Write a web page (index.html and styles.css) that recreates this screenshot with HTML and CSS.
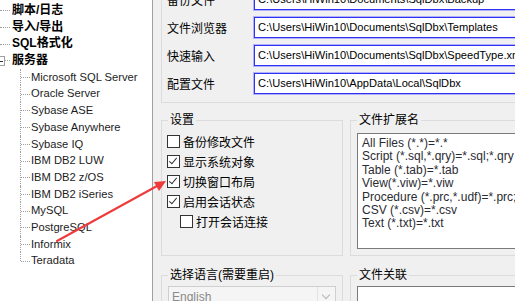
FILE: index.html
```html
<!DOCTYPE html>
<html lang="zh-CN">
<head>
  <meta charset="UTF-8">
  <title>SqlDbx 选项</title>
  <link rel="stylesheet" href="styles.css">
</head>
<body>
  <div class="tree">
    <ul class="roots">
      <li class="root">脚本/日志</li>
      <li class="root">导入/导出</li>
      <li class="root">SQL格式化</li>
      <li class="root open"><span class="toggle"></span>服务器</li>
    </ul>
    <ul class="children">
      <li>Microsoft SQL Server</li>
      <li>Oracle Server</li>
      <li>Sybase ASE</li>
      <li>Sybase Anywhere</li>
      <li>Sybase IQ</li>
      <li>IBM DB2 LUW</li>
      <li>IBM DB2 z/OS</li>
      <li>IBM DB2 iSeries</li>
      <li>MySQL</li>
      <li>PostgreSQL</li>
      <li>Informix</li>
      <li>Teradata</li>
    </ul>
  </div>

  <div class="main">
    <div class="paths">
      <label>备份文件</label>
      <div class="path-input">C:\Users\HiWin10\Documents\SqlDbx\Backup</div>
      <label>文件浏览器</label>
      <div class="path-input">C:\Users\HiWin10\Documents\SqlDbx\Templates</div>
      <label>快速输入</label>
      <div class="path-input">C:\Users\HiWin10\Documents\SqlDbx\SpeedType.xml</div>
      <label>配置文件</label>
      <div class="path-input">C:\Users\HiWin10\AppData\Local\SqlDbx</div>
    </div>

    <div class="groups">
      <fieldset class="group settings">
        <legend>设置</legend>
        <div class="check"><span class="box"></span>备份修改文件</div>
        <div class="check"><span class="box checked"></span>显示系统对象</div>
        <div class="check"><span class="box checked"></span>切换窗口布局</div>
        <div class="check"><span class="box checked"></span>启用会话状态</div>
        <div class="check sub"><span class="box"></span>打开会话连接</div>
      </fieldset>

      <fieldset class="group ext">
        <legend>文件扩展名</legend>
        <div class="ext-list">All Files (*.*)=*.*
Script (*.sql,*.qry)=*.sql;*.qry
Table (*.tab)=*.tab
View(*.viw)=*.viw
Procedure (*.prc,*.udf)=*.prc;*.udf
CSV (*.csv)=*.csv
Text (*.txt)=*.txt</div>
      </fieldset>

      <fieldset class="group lang">
        <legend>选择语言(需要重启)</legend>
        <div class="combo">
          <span class="combo-value">English</span>
          <span class="combo-arrow"></span>
        </div>
      </fieldset>

      <fieldset class="group assoc">
        <legend>文件关联</legend>
        <div class="assoc-list"></div>
      </fieldset>
    </div>
  </div>

  <!-- 标注箭头 -->
  <svg class="arrow" width="515" height="301" viewBox="0 0 515 301">
    <line x1="57" y1="241" x2="157" y2="186" stroke="#ee3a3a" stroke-width="2" stroke-linecap="round"/>
    <polygon points="166,181 159,191 154,182" fill="#ee3a3a"/>
  </svg>
</body>
</html>
```

FILE: styles.css
```css
/* SqlDbx 选项窗口 */
body {
  margin: 0;
  width: 515px;
  height: 301px;
  overflow: hidden;
  display: flex;
  position: relative;
  font-family: "Liberation Sans", "Noto Sans CJK SC", sans-serif;
  font-size: 12px;
  color: #000;
  background-color: #f0f0f0;
}

/* 左侧树 */
.tree {
  width: 152px;
  flex: none;
  background-color: #fff;
  border-right: 1px solid #a0a0a0;
  padding-top: 2px;
}

.tree ul {
  list-style: none;
  margin: 0;
  padding: 0;
}

.tree li {
  position: relative;
  height: 16.7px;
  line-height: 16.7px;
  white-space: nowrap;
}

.root {
  padding-left: 12px;
  font-weight: bold;
  font-size: 12px;
}

.root::after {
  content: '';
  position: absolute;
  left: 0;
  top: 50%;
  width: 10px;
  border-top: 1px dotted #a0a0a0;
}

.toggle {
  position: absolute;
  left: -5px;
  top: 4px;
  width: 8px;
  height: 8px;
  border: 1px solid #a0a0a0;
  background-color: #fff;
  z-index: 1;
}

.toggle::after {
  content: '';
  position: absolute;
  left: 2px;
  top: 4px;
  width: 5px;
  border-top: 1px solid #333;
}

.children li {
  padding-left: 31px;
  font-size: 11.2px;
  color: #1c1c1c;
}

.children li::before {
  content: '';
  position: absolute;
  left: 20px;
  top: 0;
  bottom: 0;
  border-left: 1px dotted #a0a0a0;
}

.children li:last-child::before {
  bottom: 50%;
}

.children li::after {
  content: '';
  position: absolute;
  left: 21px;
  top: 50%;
  width: 9px;
  border-top: 1px dotted #a0a0a0;
}

/* 右侧设置 */
.main {
  flex: 1;
  min-width: 0;
  padding-left: 8px;
  overflow: hidden;
}

.paths {
  margin-top: -20px;
  border: 1px solid #dcdcdc;
  border-right: none;
  padding: 8px 0 8px 5px;
  display: grid;
  grid-template-columns: 87px 320px;
  row-gap: 7px;
  align-items: center;
}

.paths label {
  white-space: nowrap;
}

.path-input {
  height: 19px;
  line-height: 19px;
  border: 1px solid #3030f0;
  box-shadow: 0 0 0 1px #b0b0ff;
  background-color: #fff;
  padding-left: 3px;
  font-size: 11.1px;
  white-space: nowrap;
  overflow: hidden;
}

.groups {
  margin-top: 10px;
  display: grid;
  grid-template-columns: 182px 200px;
  column-gap: 7px;
  row-gap: 12px;
}

.group {
  margin: 0;
  min-width: 0;
  border: 1px solid #dcdcdc;
  padding: 4px 6px 6px 6px;
}

.group legend {
  padding: 0 2px;
  line-height: 14px;
  white-space: nowrap;
}

.settings {
  padding-left: 5px;
}

.settings legend {
  margin-left: 1px;
}

.check {
  height: 20px;
  display: flex;
  align-items: center;
  gap: 3px;
  white-space: nowrap;
}

.check.sub {
  padding-left: 13px;
}

.box {
  width: 11px;
  height: 11px;
  border: 1px solid #333;
  background-color: #fff;
  position: relative;
}

.box.checked::after {
  content: '';
  position: absolute;
  left: 3px;
  top: 0px;
  width: 3px;
  height: 7px;
  border-right: 1px solid #333;
  border-bottom: 1px solid #333;
  transform: rotate(40deg);
}

.ext {
  padding-top: 6px;
  border-right: none;
}

.ext-list {
  height: 110px;
  border: 1px solid #7a7a7a;
  background-color: #fff;
  padding: 3px 0 1px 4px;
  white-space: pre;
  line-height: 13.4px;
  color: #2b2b33;
  overflow: hidden;
}

.combo {
  height: 20px;
  border: 1px solid #cfcfcf;
  background-color: #f5f5f5;
  display: flex;
  align-items: center;
}

.combo-value {
  flex: 1;
  padding-left: 3px;
  color: #8a8a8a;
}

.combo-arrow {
  width: 17px;
  height: 20px;
  border-left: 1px solid #e2e2e2;
  position: relative;
}

.combo-arrow::after {
  content: '';
  position: absolute;
  left: 5px;
  top: 5px;
  width: 5px;
  height: 5px;
  border-right: 1px solid #b5b5b5;
  border-bottom: 1px solid #b5b5b5;
  transform: rotate(45deg);
}

.assoc {
  border-right: none;
}

.assoc-list {
  height: 40px;
  border: 1px solid #7a7a7a;
  background-color: #fff;
}

/* 红色箭头标注 */
.arrow {
  position: absolute;
  left: 0;
  top: 0;
  pointer-events: none;
}
```
